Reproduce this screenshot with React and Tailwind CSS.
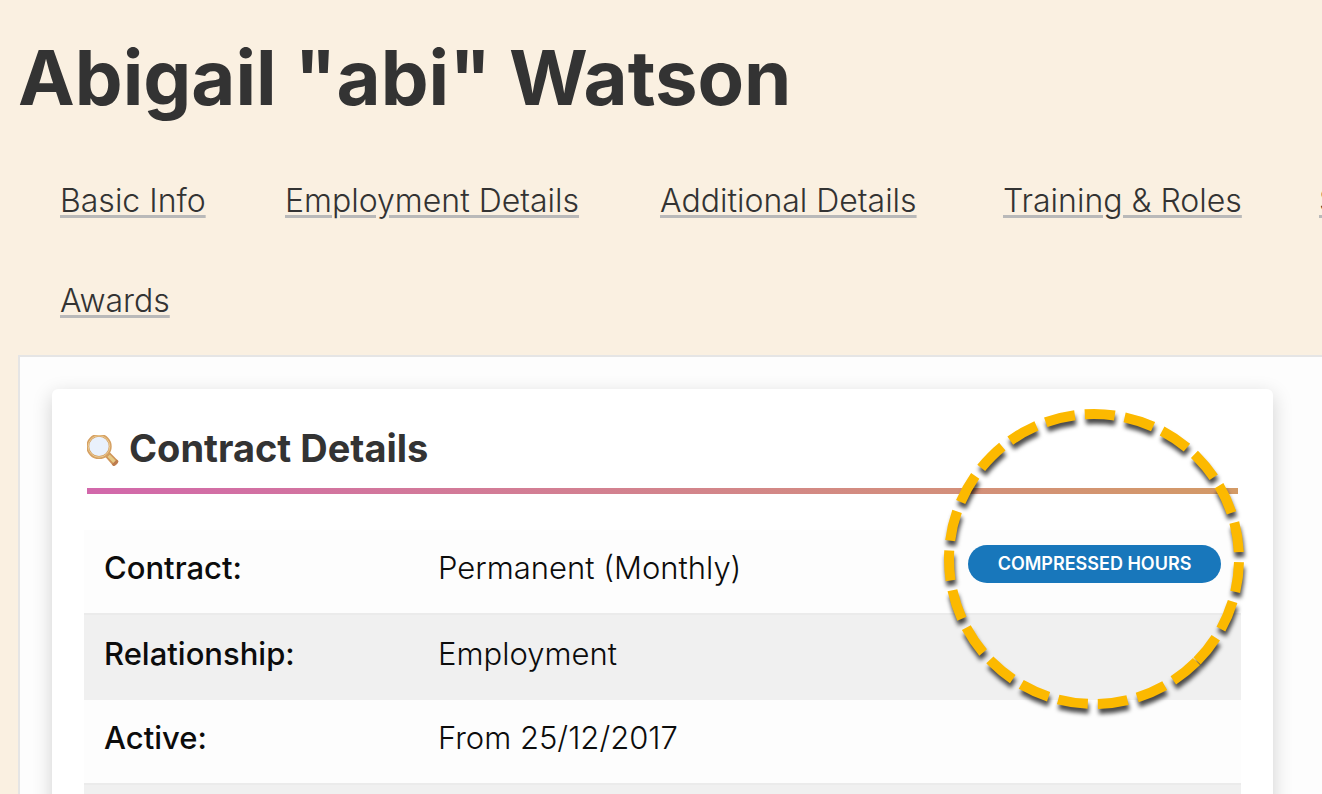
import React from 'react';

const tabs = [
  { label: 'Basic Info', width: 'w-[225px]' },
  { label: 'Employment Details', width: 'w-[375px]' },
  { label: 'Additional Details', width: 'w-[343px]' },
  { label: 'Training & Roles', width: 'w-[316px]' },
  { label: 'Salary', width: 'w-[225px]' },
];

const contractRows = [
  { label: 'Contract:', value: 'Permanent (Monthly)', badge: 'Compressed Hours' },
  { label: 'Relationship:', value: 'Employment' },
  { label: 'Active:', value: 'From 25/12/2017' },
  { label: '', value: '' },
];

const TabLink = ({ label, href = '#' }) => (
  <a
    href={href}
    className="whitespace-nowrap underline decoration-[#b9b9b9] decoration-3 underline-offset-3"
  >
    {label}
  </a>
);

const MagnifierIcon = () => (
  <svg viewBox="0 0 32 32" className="size-8 shrink-0" aria-hidden="true">
    <path d="M18 21.5l4.5-4.5 8.6 8.8c1.2 1.3-3.6 6.4-5 5z" fill="#cf9558" />
    <path d="M20.4 21.8l2.4-2.4 6 6.4-2.2 2.4z" fill="#e6ca86" />
    <path d="M24.8 29.6l5-5.2 1.3 1.4c1.2 1.3-3.6 6.4-5 5z" fill="#bd7c4f" />
    <circle cx="12" cy="11.4" r="11.2" fill="#e9f1fc" stroke="#d5a062" strokeWidth="3" />
    <circle cx="12" cy="11.4" r="10.8" fill="none" stroke="#eccb92" strokeWidth="1" />
  </svg>
);

// Dashed ring that draws attention to the badge
const HighlightRing = () => (
  <svg
    viewBox="0 0 320 320"
    className="pointer-events-none absolute top-[10px] right-[19px] size-80 drop-shadow-[1px_5px_2px_rgba(0,0,0,0.7)]"
    aria-hidden="true"
  >
    <circle
      cx="160"
      cy="160"
      r="145"
      fill="none"
      stroke="#fcb900"
      strokeWidth="10"
      strokeDasharray="30 10"
      transform="rotate(45 160 160)"
    />
  </svg>
);

const ContractCard = () => (
  <section className="relative mr-[49px] ml-8 mt-8 rounded-md bg-white px-8 pt-10 pb-10 shadow-[0_6px_20px_rgba(0,0,0,0.18)]">
    <h2 className="mx-[3px] flex items-end gap-2.5 text-[38px] leading-[38px] font-bold text-[#333333]">
      <MagnifierIcon />
      Contract Details
    </h2>
    <div className="mx-[3px] mt-[21px] h-[6px] bg-linear-to-r from-[#d268ab] to-[#d39a66]" />

    <table className="mt-9 w-full table-fixed text-[31px] leading-10 text-[#0c0c0c]">
      <tbody>
        {contractRows.map((row, i) => (
          <tr
            key={i}
            className="h-[84px] bg-[#fdfdfd] even:h-[86px] even:border-t-2 even:border-[#ebebeb] even:bg-[#f0f0f0]"
          >
            <th scope="row" className="w-[334px] pb-2 pl-5 text-left font-medium">
              {row.label}
            </th>
            <td className="pb-2 pl-5 font-light whitespace-nowrap">{row.value}</td>
            <td className="w-[293px] pr-5 pb-4 text-right">
              {row.badge && (
                <span className="flex h-[38px] w-[253px] items-center justify-center justify-self-end rounded-full bg-[#1877bb] text-lg font-semibold text-white uppercase">
                  {row.badge}
                </span>
              )}
            </td>
          </tr>
        ))}
      </tbody>
    </table>
    <HighlightRing />
  </section>
);

export default function App() {
  return (
    <div className="h-screen overflow-hidden bg-[#faf0e1] pl-[18px] font-['Inter','Liberation_Sans',sans-serif]">
      <h1 className="pt-8 text-[76px] leading-[90px] font-bold whitespace-nowrap text-[#333333]">
        Abigail "abi" Watson
      </h1>

      <nav className="mt-[54px] pl-[42px] text-[32px] leading-[50px] font-light text-[#333333]">
        <ul className="flex">
          {tabs.map((tab) => (
            <li key={tab.label} className={`shrink-0 ${tab.width}`}>
              <TabLink label={tab.label} />
            </li>
          ))}
        </ul>
        <ul className="mt-[50px] flex">
          <li>
            <TabLink label="Awards" />
          </li>
        </ul>
      </nav>

      <main className="mt-[29px] border-t-2 border-l-2 border-[#e5e5e5] bg-[#fdfdfd]">
        <div className="flow-root">
          <ContractCard />
        </div>
      </main>
    </div>
  );
}
